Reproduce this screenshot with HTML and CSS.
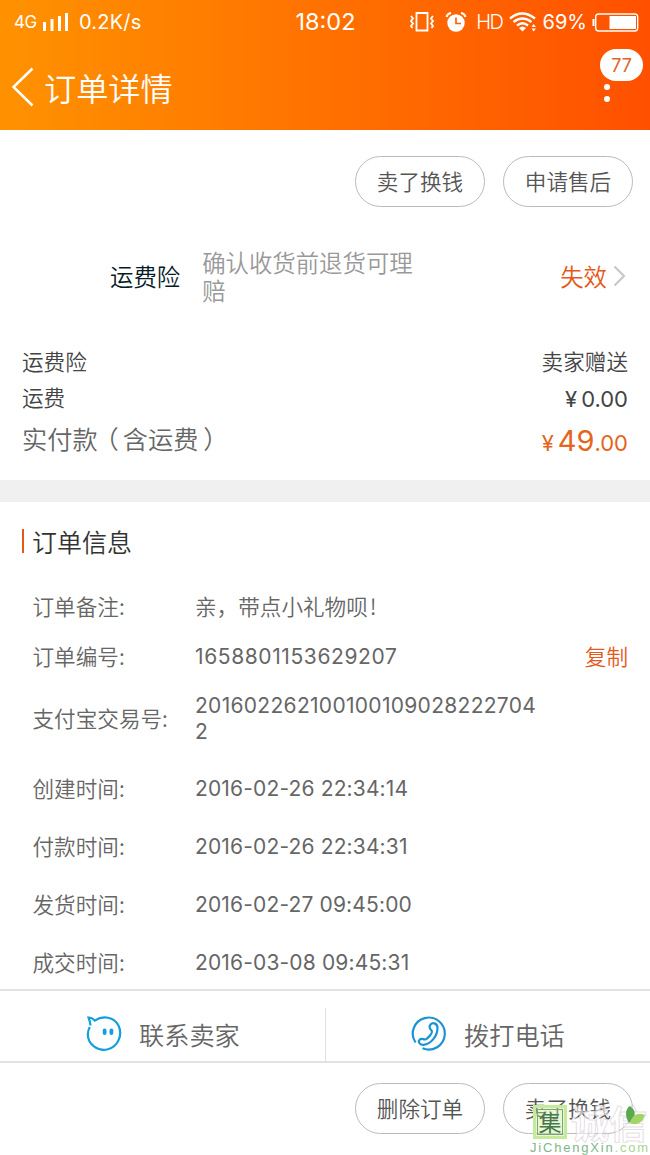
FILE: index.html
```html
<!DOCTYPE html>
<html lang="zh-CN">
<head>
  <meta charset="UTF-8">
  <meta name="viewport" content="width=device-width, initial-scale=1.0">
  <title>订单详情</title>
  <link rel="stylesheet" href="styles.css">
</head>
<body>
  <header class="header">
    <div class="status">
      <div class="status-left">
        <span class="net">4G</span>
        <svg class="signal" width="26" height="19" viewBox="0 0 26 19" fill="#fff">
          <path d="M0 9h3v9H0zM7.500 6h3v12h-3zM15 3h3v15h-3zM22 0h3v18h-3z"/>
        </svg>
        <span class="speed">0.2K/s</span>
      </div>
      <span class="clock">18:02</span>
      <div class="status-right">
        <svg class="vibrate" width="24" height="20" viewBox="0 0 24 20" fill="none" stroke="#fff" stroke-width="1.800">
          <path d="M6.500 1h11v17.500h-11z"/>
          <path d="M1 4l2 2.500-2 2.500 2 2.500-2 2.500 1.500 2M23 4l-2 2.500 2 2.500-2 2.500 2 2.500-1.500 2"/>
        </svg>
        <svg class="alarm" width="22" height="20" viewBox="0 0 22 20">
          <circle cx="11" cy="11" r="8.700" fill="#fff"/>
          <path d="M1.500 5Q2.500 1.500 6 1M20.500 5Q19.500 1.500 16 1" fill="none" stroke="#fff" stroke-width="2"/>
          <path d="M11 5.500V11.500h5" fill="none" stroke="#ff6200" stroke-width="1.700"/>
        </svg>
        <span class="hd">HD</span>
        <svg class="wifi" width="28" height="20" viewBox="0 0 28 20" fill="none" stroke="#fff" stroke-width="2.300">
          <path d="M1 6.500Q13 -3.500 26 6.500M4.500 10Q13.500 3 22.500 10M8 13.500Q13.500 9 19 13.500"/>
          <path d="M10 16Q13.500 13 17 16L13.500 19.500z" fill="#fff" stroke="none"/>
          <path d="M22.500 15l2.200-3 2.200 3zM22.500 16.500l2.200 3 2.200-3z" fill="#fff" stroke="none"/>
        </svg>
        <span class="percent">69%</span>
        <svg class="battery" width="47" height="19" viewBox="0 0 47 19">
          <path d="M1.500 6v7" stroke="#fff" stroke-width="2"/>
          <rect x="3.700" y="1" width="42" height="17" rx="3" fill="none" stroke="#fff" stroke-width="1.400"/>
          <path d="M17.500 3H44v13H17.500z" fill="#fff"/>
        </svg>
      </div>
    </div>
    <div class="title-bar">
      <svg class="back" width="22" height="40" viewBox="0 0 22 40" fill="none" stroke="#fff" stroke-width="2.500">
        <path d="M20.500 1.500L1.500 20l19 18.500"/>
      </svg>
      <h1>订单详情</h1>
      <div class="more">
        <i></i><i></i>
        <span class="badge">77</span>
      </div>
    </div>
  </header>

  <div class="actions">
    <button class="btn">卖了换钱</button>
    <button class="btn">申请售后</button>
  </div>

  <div class="insurance">
    <span class="ins-name">运费险</span>
    <span class="ins-desc">确认收货前退货可理赔</span>
    <span class="ins-state">失效</span>
    <svg width="13" height="22" viewBox="0 0 13 22" fill="none" stroke="#c8c8c8" stroke-width="2.200">
      <path d="M1.500 1.500l9.500 9.500-9.500 9.500"/>
    </svg>
  </div>

  <div class="fees">
    <div class="fee"><span>运费险</span><span>卖家赠送</span></div>
    <div class="fee"><span>运费</span><span class="num"><span class="yen">¥</span>0.00</span></div>
    <div class="fee total"><span>实付款<span class="paren-open">（</span>含运费<span class="paren-close">）</span></span><span class="num price"><span class="yen">¥</span><b>49</b>.00</span></div>
  </div>

  <section class="order">
    <h2>订单信息</h2>
    <div class="row"><span class="label">订单备注:</span><span class="value">亲，带点小礼物呗<span class="mark">!</span></span></div>
    <div class="row"><span class="label">订单编号:</span><span class="value num order-no">1658801153629207</span><a class="copy">复制</a></div>
    <div class="row trade"><span class="label">支付宝交易号:</span><span class="value num">201602262100100109028222704<br>2</span></div>
    <div class="row time"><span class="label">创建时间:</span><span class="value num">2016-02-26 22:34:14</span></div>
    <div class="row time"><span class="label">付款时间:</span><span class="value num">2016-02-26 22:34:31</span></div>
    <div class="row time"><span class="label">发货时间:</span><span class="value num">2016-02-27 09:45:00</span></div>
    <div class="row time"><span class="label">成交时间:</span><span class="value num">2016-03-08 09:45:31</span></div>
  </section>

  <div class="contact">
    <div class="contact-item">
      <svg width="36" height="36" viewBox="0 0 36 36" fill="none" stroke="#129fe0" stroke-width="2.200">
        <path d="M4.500 9.500Q4 5 2.500 1.500Q6 1.300 8.800 4.600C17-1 28 1 32.500 9.500C37 19 32 30.500 22 33.300C12 36 2 28.500 1.800 18.500Q1.800 14.500 3.800 11"/>
        <path d="M18.600 14.500v2.500M25.400 14.500v2.500" stroke-width="3.800" stroke-linecap="round"/>
      </svg>
      <span>联系卖家</span>
    </div>
    <div class="contact-item">
      <svg width="36" height="36" viewBox="0 0 36 36" fill="none" stroke="#1a93d6" stroke-width="2.200">
        <path d="M4.500 26.500A16 16 0 1 1 11.500 32.300"/>
        <path d="M19.500 8.500C22 6 26.500 7.500 26.500 12C26.500 20 20 28 12.500 28.800C8.500 29.200 6.500 25.500 9 23.300C11.500 21.500 13.500 25 16 22.500C18.500 20 22.500 17 20.500 14.500C18.500 12.500 17.500 11 19.500 8.500z"/>
      </svg>
      <span>拨打电话</span>
    </div>
  </div>

  <footer class="actions bottom">
    <button class="btn">删除订单</button>
    <button class="btn">卖了换钱</button>
    <div class="watermark">
      <div class="wm-name"><span class="wm-box">集</span><span class="wm-text">诚信</span></div>
      <svg class="leaf" width="22" height="20" viewBox="0 0 22 20">
        <path d="M3 17C-2 9 0 2 4 0C10 4 11 11 3 17z" fill="#5ba94f"/>
        <path d="M4 17C6 9 12 6 19 9C17 17 10 20 4 17z" fill="#a2d568"/>
      </svg>
      <div class="wm-url"><span>JiChengXin</span>.com</div>
    </div>
  </footer>
</body>
</html>
```
FILE: styles.css
```css
* {
  box-sizing: border-box;
}
body {
  margin: 0;
  width: 650px;
  height: 1155px;
  overflow: hidden;
  background: #fff;
  color: #666;
  font-family: "Noto Sans CJK SC", sans-serif;
  font-weight: 350;
  font-size: 21.6px;
}
h1, h2 {
  margin: 0;
  font-weight: 350;
}
svg {
  flex: none;
  display: block;
}
.num {
  font-family: Inter, "Noto Sans CJK SC", sans-serif;
  font-weight: 400;
}

/* header */
.header {
  height: 130px;
  background: linear-gradient(to right, #ff9200, #ff5000);
  color: #fff;
}
.status {
  height: 44px;
  display: grid;
  grid-template-columns: 1fr auto 1fr;
  align-items: center;
  padding: 0 11px 0 14px;
  font-family: Inter, sans-serif;
  font-weight: 400;
  line-height: 44px;
}
.status-left, .status-right {
  display: flex;
  align-items: center;
}
.status-right {
  justify-content: flex-end;
}
.net {
  font-size: 17px;
  width: 29px;
  letter-spacing: -0.6px;
}
.speed {
  font-size: 20px;
  margin-left: 10px;
  letter-spacing: 0.2px;
}
.clock {
  margin-left: -2px;
  font-size: 23.5px;
}
.alarm {
  margin-left: 11px;
}
.hd {
  font-size: 20px;
  margin-left: 9px;
  font-weight: 300;
  letter-spacing: -1.4px;
}
.wifi {
  margin-left: 6px;
}
.percent {
  font-size: 20px;
  margin-left: 6px;
}
.battery {
  margin-left: 5px;
}
.title-bar {
  height: 86px;
  display: flex;
  align-items: center;
  padding: 0 7px 0 12px;
}
.title-bar h1 {
  margin-left: 10px;
  font-size: 32.2px;
  line-height: 84px;
}
.title-bar h1, .back {
  margin-bottom: 1px;
}
.more {
  position: relative;
  width: 43px;
  height: 86px;
  margin-left: auto;
  padding: 40px 0 0 4px;
}
.more i {
  display: block;
  width: 6px;
  height: 6px;
  margin-bottom: 6px;
  border-radius: 50%;
  background: #fff;
}
.badge {
  position: absolute;
  top: 5px;
  left: 0;
  width: 43px;
  height: 32px;
  border-radius: 16px;
  background: #fff;
  color: #e06428;
  font: 400 18px/33px Inter, sans-serif;
  text-align: center;
}

/* buttons */
.actions {
  height: 77px;
  display: flex;
  justify-content: flex-end;
  align-items: flex-end;
  gap: 18px;
  padding-right: 17px;
}
.btn {
  width: 130px;
  height: 51px;
  padding: 0 0 2px;
  border: 1px solid #bbb;
  border-radius: 26px;
  background: #fff;
  color: #555;
  font: inherit;
}

/* insurance */
.insurance {
  height: 137px;
  display: flex;
  align-items: center;
  padding: 0 24px 0 110px;
  font-size: 23.4px;
}
.ins-name {
  color: #051b28;
}
.ins-desc {
  width: 216px;
  margin-left: 22px;
  color: #999;
  line-height: 28px;
}
.ins-state {
  margin-left: auto;
  margin-right: 6px;
  color: #e5581a;
}

/* fees */
.fees {
  height: 136px;
  padding: 0 22px;
  color: #444;
}
.fee {
  height: 36px;
  display: flex;
  justify-content: space-between;
  align-items: center;
  line-height: 36px;
  padding-bottom: 2px;
}
.fee .num {
  padding-top: 3px;
  font-size: 22px;
}
.yen {
  margin-right: 4px;
}
.paren-open {
  margin-left: -4px;
  margin-right: 4px;
}
.paren-close {
  margin-left: 5px;
}
.total {
  height: 48px;
  padding-bottom: 4px;
  color: #666;
  font-size: 25.2px;
}
.fee .price {
  padding-top: 7px;
  color: #e5641e;
}
.price b {
  font-weight: 400;
  font-size: 29px;
}

/* order info */
.order {
  height: 509px;
  border-top: 22px solid #f0f0f0;
}
.order h2 {
  height: 78px;
  display: flex;
  align-items: center;
  padding-left: 22px;
  color: #333;
  font-size: 25px;
}
.order h2::before {
  content: "";
  width: 2px;
  height: 24px;
  margin-right: 8px;
  background: #e5581a;
}
.row {
  height: 50px;
  display: flex;
  align-items: center;
  padding: 0 22px 0 32.5px;
}
.label {
  width: 162.5px;
}
.value.num {
  padding-top: 3px;
  font-size: 21px;
  letter-spacing: 0.15px;
  line-height: 26px;
}
.value.order-no {
  letter-spacing: 0.6px;
}
.mark {
  margin-left: 2px;
}
.copy {
  margin-left: auto;
  color: #e5581a;
}
.trade {
  height: 74px;
}
.trade .value.num {
  padding-top: 3px;
  letter-spacing: 0.3px;
}
.time {
  height: 58px;
}
.trade + .time {
  margin-top: 4px;
}

/* contact */
.contact {
  height: 74px;
  display: flex;
  border-top: 2px solid #e2e2e2;
  border-bottom: 2px solid #e2e2e2;
  font-size: 25.2px;
}
.contact-item {
  flex: 1;
  display: flex;
  align-items: center;
  gap: 17px;
  padding: 16px 0 0 86px;
}
.contact-item + .contact-item {
  background: linear-gradient(#e2e2e2, #e2e2e2) 0 100% / 1px 53px no-repeat;
}

/* bottom */
.bottom {
  position: relative;
  height: 71px;
}
.watermark {
  position: absolute;
  right: 0;
  bottom: -22px;
  width: 120px;
  height: 52px;
}
.wm-name {
  display: flex;
  align-items: center;
  height: 36px;
}
.wm-box {
  width: 34px;
  height: 34px;
  margin-left: 3px;
  border: 3px solid #c7e99b;
  outline: 1px solid #76a969;
  outline-offset: -5px;
  background: rgba(199, 233, 155, 0.4);
  color: #45784a;
  font-size: 23px;
  font-weight: 400;
  line-height: 26px;
  text-align: center;
}
.wm-text {
  margin-left: 4px;
  color: rgba(255, 255, 255, 0.6);
  font-size: 38px;
  font-weight: 700;
  line-height: 34px;
  -webkit-text-stroke: 1px rgba(205, 190, 203, 0.5);
}
.leaf {
  position: absolute;
  top: 2px;
  right: 2px;
}
.wm-url {
  color: #a8d58d;
  font: 400 13px/16px "Liberation Sans", sans-serif;
  letter-spacing: 1.8px;
  white-space: nowrap;
}
.wm-url span {
  color: #7fb68a;
}
```
